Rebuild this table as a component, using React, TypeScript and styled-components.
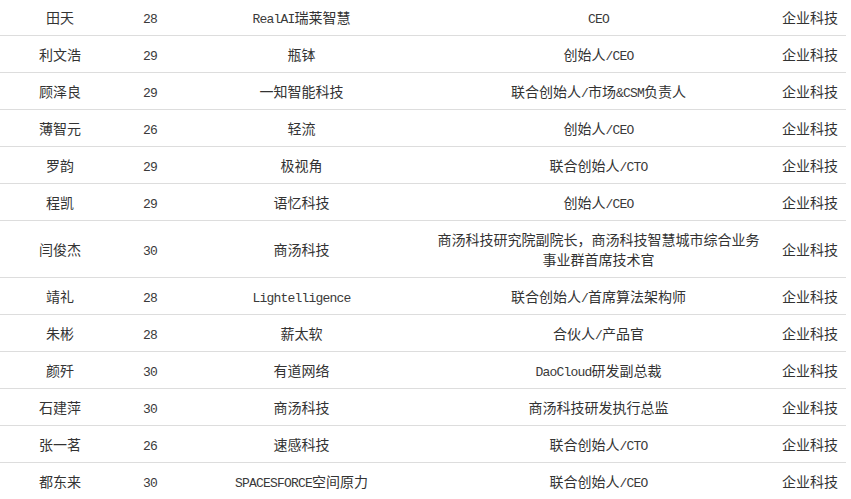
import React from 'react';
import styled, { createGlobalStyle } from 'styled-components';

const GlobalStyle = createGlobalStyle`
  html, body {
    margin: 0;
    padding: 0;
    background: #fff;
    overflow: hidden;
  }
`;

const Table = styled.table`
  width: 846px;
  margin-top: -1px;
  border-collapse: collapse;
  table-layout: fixed;
  font-family: "Noto Sans CJK SC", "Liberation Sans", sans-serif;
  font-size: 14px;
  color: #333;
`;

const Col = styled.col<{ $w: number }>`
  width: ${p => p.$w}px;
`;

const Cell = styled.td<{ $pad?: number }>`
  height: 20px;
  padding: 8px ${p => p.$pad ?? 10}px;
  line-height: 20px;
  text-align: center;
  vertical-align: middle;
  border-bottom: 1px solid #ddd;
`;

const Latin = styled.span`
  font-family: "Liberation Mono", monospace;
  font-size: 13px;
  letter-spacing: -0.8px;
  line-height: 13px;
  color: #3a3a3a;
`;

type Person = {
  name: string;
  age: string;
  company: string;
  title: string;
};

const people: Person[] = [
  { name: '田天', age: '28', company: 'RealAI瑞莱智慧', title: 'CEO' },
  { name: '利文浩', age: '29', company: '瓶钵', title: '创始人/CEO' },
  { name: '顾泽良', age: '29', company: '一知智能科技', title: '联合创始人/市场&CSM负责人' },
  { name: '薄智元', age: '26', company: '轻流', title: '创始人/CEO' },
  { name: '罗韵', age: '29', company: '极视角', title: '联合创始人/CTO' },
  { name: '程凯', age: '29', company: '语忆科技', title: '创始人/CEO' },
  { name: '闫俊杰', age: '30', company: '商汤科技', title: '商汤科技研究院副院长，商汤科技智慧城市综合业务事业群首席技术官' },
  { name: '靖礼', age: '28', company: 'Lightelligence', title: '联合创始人/首席算法架构师' },
  { name: '朱彬', age: '28', company: '薪太软', title: '合伙人/产品官' },
  { name: '颜歼', age: '30', company: '有道网络', title: 'DaoCloud研发副总裁' },
  { name: '石建萍', age: '30', company: '商汤科技', title: '商汤科技研发执行总监' },
  { name: '张一茗', age: '26', company: '速感科技', title: '联合创始人/CTO' },
  { name: '都东来', age: '30', company: 'SPACESFORCE空间原力', title: '联合创始人/CEO' },
];

// ascii runs are set in a narrower mono face, like the half-width glyphs of the original
const Mixed: React.FC<{ text: string }> = ({ text }) => {
  const parts = text.match(/[\x20-\x7e]+|[^\x20-\x7e]+/g) || [];
  return (
    <>
      {parts.map((part, i) =>
        /^[\x20-\x7e]+$/.test(part) ? <Latin key={i}>{part}</Latin> : <React.Fragment key={i}>{part}</React.Fragment>
      )}
    </>
  );
};

const App: React.FC = () => {
  return (
    <>
      <GlobalStyle />
      <Table>
        <colgroup>
          <Col $w={120} />
          <Col $w={60} />
          <Col $w={243} />
          <Col $w={351} />
          <Col $w={72} />
        </colgroup>
        <tbody>
          {people.map(p => (
            <tr key={p.name}>
              <Cell>{p.name}</Cell>
              <Cell><Mixed text={p.age} /></Cell>
              <Cell><Mixed text={p.company} /></Cell>
              <Cell><Mixed text={p.title} /></Cell>
              <Cell $pad={4}>企业科技</Cell>
            </tr>
          ))}
        </tbody>
      </Table>
    </>
  );
};

export default App;
